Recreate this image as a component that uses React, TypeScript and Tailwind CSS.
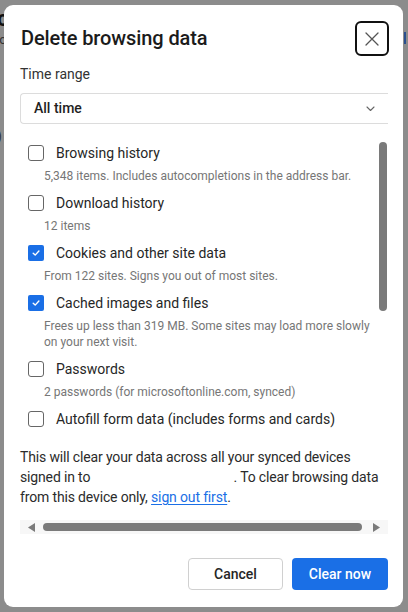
import React from "react";

type Item = { label: string; sub: string[]; checked: boolean };

const items: Item[] = [
  { label: "Browsing history", sub: ["5,348 items. Includes autocompletions in the address bar."], checked: false },
  { label: "Download history", sub: ["12 items"], checked: false },
  { label: "Cookies and other site data", sub: ["From 122 sites. Signs you out of most sites."], checked: true },
  {
    label: "Cached images and files",
    sub: ["Frees up less than 319 MB. Some sites may load more slowly", "on your next visit."],
    checked: true,
  },
  { label: "Passwords", sub: ["2 passwords (for microsoftonline.com, synced)"], checked: false },
  { label: "Autofill form data (includes forms and cards)", sub: ["Addresses, phone numbers and 2 other items"], checked: false },
];

function Checkbox({ checked }: { checked: boolean }) {
  if (checked) {
    return (
      <div className="w-[16px] h-[16px] rounded-[2px] bg-[#1a6fe6] flex items-center justify-center shrink-0">
        <svg width="10" height="10" viewBox="0 0 10 10" fill="none">
          <path d="M2.2 5.2 L4.2 7.1 L7.9 3" stroke="white" strokeWidth="1.4" strokeLinecap="round" strokeLinejoin="round" />
        </svg>
      </div>
    );
  }
  return <div className="w-[16px] h-[16px] rounded-[3px] border border-[#666] bg-white shrink-0" />;
}

export default function App() {
  return (
    <div
      className="relative w-[408px] h-[612px] bg-[#8c8c8c] overflow-hidden text-[#1f1f1f]"
      style={{ fontFamily: "Roboto, 'Noto Sans', sans-serif" }}
    >
      {/* dimmed page behind the dialog */}
      <div className="absolute left-[-3px] top-[2px] text-[22px] font-bold text-[#111]">c</div>
      <div className="absolute left-[-5px] top-[30px] text-[13px] text-[#333]">ro</div>
      <div className="absolute left-[-3px] top-[126px] text-[14px] text-[#333]">)</div>
      <div className="absolute right-[2px] top-[32px] w-[2px] h-[12px] bg-[#2a4f8f]" />

      <div className="absolute left-[4px] top-[5px] w-[399px] h-[602px] bg-white rounded-[9px] flex flex-col">
        {/* header */}
        <div className="flex items-start justify-between pl-[17px] pr-[14px] pt-[15px]">
          <h1 className="text-[20px] font-medium leading-[34px] mt-[1px] tracking-[-0.1px] text-[#1b1b1b]">
            Delete browsing data
          </h1>
          <button className="w-[34px] h-[35px] mt-[1px] rounded-[6px] border-2 border-[#111] flex items-center justify-center">
            <svg width="14" height="14" viewBox="0 0 14 14" fill="none">
              <path d="M1 1 L13 13 M13 1 L1 13" stroke="#555" strokeWidth="1.3" strokeLinecap="round" />
            </svg>
          </button>
        </div>

        {/* time range */}
        <div className="pl-[16px] mt-[8px]">
          <div className="text-[14px] leading-[20px] text-[#333]">Time range</div>
          <div className="mt-[9px] w-[368px] h-[31px] border-t border-b border-l border-[#dcdcdc] rounded-l-[4px] flex items-center justify-between pl-[13px] pr-[13px]">
            <span className="text-[14px] font-medium text-[#1f1f1f]">All time</span>
            <svg width="9" height="6" viewBox="0 0 9 6" fill="none">
              <path d="M1 1 L4.5 4.5 L8 1" stroke="#666" strokeWidth="1.1" strokeLinecap="round" strokeLinejoin="round" />
            </svg>
          </div>
        </div>

        {/* options list */}
        <div className="relative mt-[18px] h-[291px] overflow-hidden">
          <div className="flex flex-col gap-[8px] pl-[24px]">
            {items.map((it) => (
              <div key={it.label} className="flex flex-col">
                <div className="flex items-center gap-[12px] h-[22px]">
                  <Checkbox checked={it.checked} />
                  <span className="text-[14px] text-[#262626]">{it.label}</span>
                </div>
                <div className="mt-[4px] pl-[16px]">
                  {it.sub.map((s) => (
                    <div key={s} className="text-[12px] leading-[16px] text-[#767676]">
                      {s}
                    </div>
                  ))}
                </div>
              </div>
            ))}
          </div>
          <div className="absolute right-[16px] top-0 w-[8px] h-[169px] rounded-full bg-[#7a7a7a]" />
        </div>

        {/* sync notice */}
        <div className="pl-[16px] pr-[10px] mt-[14px] text-[14px] leading-[20px] text-[#2b2b2b] tracking-[-0.15px]">
          This will clear your data across all your synced devices
          <br />
          signed in to <span className="inline-block w-[140px]" />. To clear browsing data
          <br />
          from this device only,{" "}
          <a className="text-[#1a6fe6] underline underline-offset-2">sign out first</a>.
        </div>

        {/* horizontal scrollbar */}
        <div className="ml-[16px] mt-[13px] w-[368px] h-[14px] bg-[#f7f7f7] flex items-center gap-[8px] px-[8px]">
          <svg width="7" height="9" viewBox="0 0 7 9" className="shrink-0">
            <path d="M7 0 L0 4.5 L7 9 Z" fill="#7a7a7a" />
          </svg>
          <div className="flex-1 h-[8px] rounded-full bg-[#7a7a7a] mr-[3px]" />
          <svg width="7" height="9" viewBox="0 0 7 9" className="shrink-0">
            <path d="M0 0 L7 4.5 L0 9 Z" fill="#7a7a7a" />
          </svg>
        </div>

        {/* buttons */}
        <div className="flex justify-end gap-[9px] pr-[15px] mt-[24px]">
          <button className="w-[95px] h-[32px] rounded-[4px] border border-[#d0d0d0] bg-white text-[14px] font-medium text-[#262626]">
            Cancel
          </button>
          <button className="w-[96px] h-[32px] rounded-[4px] bg-[#1a6fe6] text-[14px] font-medium text-white">
            Clear now
          </button>
        </div>
      </div>
    </div>
  );
}
